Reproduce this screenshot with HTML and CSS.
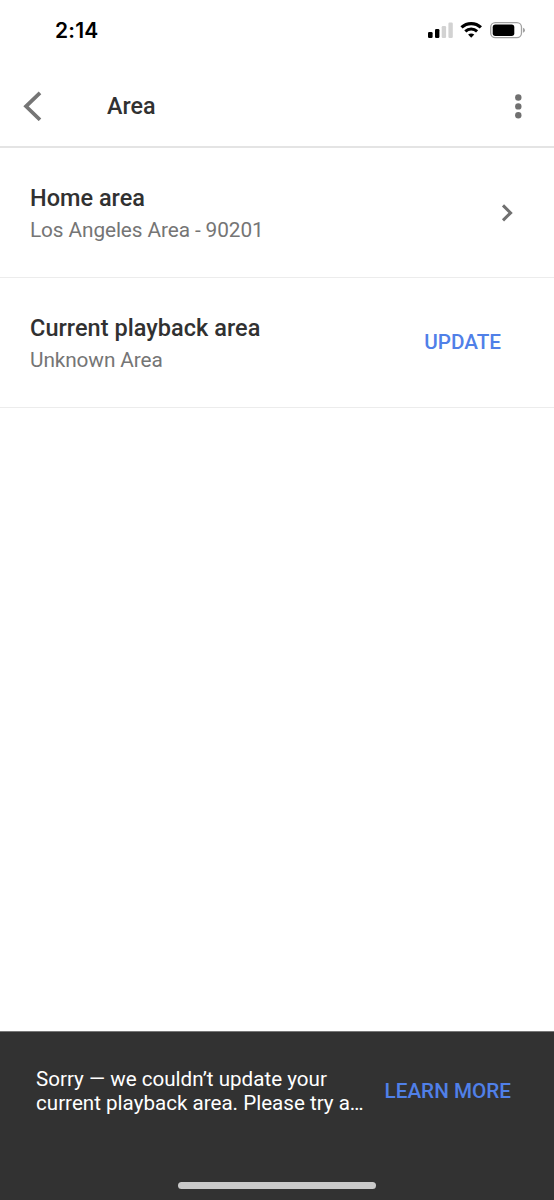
FILE: index.html
```html
<!DOCTYPE html>
<html lang="en">
<head>
<meta charset="utf-8">
<title>Area</title>
<link rel="stylesheet" href="styles.css">
</head>
<body>
<div class="screen">
  <div class="status">
    <span class="clock">2:14</span>
    <svg class="indicators" width="100" height="20" viewBox="0 0 100 20">
      <rect x="0" y="12" width="4.6" height="6" rx="1.2"/>
      <rect x="7" y="9" width="4.4" height="9" rx="1.2"/>
      <rect x="13.7" y="6" width="4.4" height="12" rx="1.2" fill="#d2d2d2"/>
      <rect x="20.4" y="2.5" width="4.4" height="15.5" rx="1.2" fill="#d2d2d2"/>
      <path d="M33.5 7.4 A14.2 14.2 0 0 1 52.9 7.4" fill="none" stroke="#000" stroke-width="3.2"/>
      <path d="M37.3 11.4 A8.6 8.6 0 0 1 49.1 11.4" fill="none" stroke="#000" stroke-width="3"/>
      <path d="M40.1 14.6 Q43.2 12.4 46.3 14.6 L43.2 17.8 Z"/>
      <rect x="62.7" y="2.7" width="30.8" height="15" rx="4.6" fill="none" stroke="#a2a2a2" stroke-width="1.3"/>
      <rect x="64.7" y="4.5" width="21.6" height="11.4" rx="2.7"/>
      <path d="M95 7.7 Q97 8.4 97 10.2 T95 12.7 Z" fill="#a2a2a2"/>
    </svg>
  </div>
  <header class="bar">
    <svg class="back" width="20" height="30" viewBox="0 0 20 30"><path d="M17 1.8 L3 15.3 L17 28.8" fill="none" stroke="#757575" stroke-width="3.7"/></svg>
    <h1 class="title">Area</h1>
    <svg class="more" width="8" height="26" viewBox="0 0 8 26" fill="#707070"><circle cx="4.3" cy="4.5" r="3.2"/><circle cx="4.3" cy="13.4" r="3.2"/><circle cx="4.3" cy="22.3" r="3.2"/></svg>
  </header>
  <main class="list">
    <section class="row">
      <div class="copy">
        <h2 class="name">Home area</h2>
        <p class="detail">Los Angeles Area - 90201</p>
      </div>
      <svg class="chevron" width="12" height="18" viewBox="0 0 12 18"><path d="M2 1.4 L9.6 8.9 L2 16.4" fill="none" stroke="#707070" stroke-width="3"/></svg>
    </section>
    <section class="row">
      <div class="copy">
        <h2 class="name current">Current playback area</h2>
        <p class="detail">Unknown Area</p>
      </div>
      <span class="action update">UPDATE</span>
    </section>
  </main>
  <footer class="snackbar">
    <div class="notice">
      <p class="message">Sorry — we couldn’t update your<br>current playback area. Please try a…</p>
      <span class="action learn">LEARN MORE</span>
    </div>
    <div class="home"></div>
  </footer>
</div>
</body>
</html>
```
FILE: styles.css
```css
* { box-sizing: border-box; }
body { margin: 0; background: #fff; font-family: Roboto, sans-serif; }
h1, h2, p { margin: 0; font-weight: 500; }
svg { display: block; flex: none; }

.screen { width: 554px; height: 1200px; display: flex; flex-direction: column; background: #fff; }

.status { height: 66px; padding: 17px 26px 0 55px; display: flex; justify-content: space-between; }
.clock { font: 600 21px/28px Inter, sans-serif; letter-spacing: 0.2px; color: #000; }
.indicators { margin-top: 3px; }

.bar { height: 82px; padding: 0 32px 0 23px; display: flex; align-items: center; border-bottom: 2px solid #e4e4e4; }
.title { flex: 1; margin-left: 64px; font-size: 23.3px; line-height: 30px; color: #313131; }

.row { height: 130px; padding: 0 41px 0 30px; display: flex; align-items: center; justify-content: space-between; border-bottom: 1px solid #ececec; }
.copy { padding-top: 2px; }
.name { font-size: 23.5px; line-height: 32px; color: #313131; white-space: nowrap; }
.current { letter-spacing: 0.04px; }
.detail { font-size: 20.8px; line-height: 32px; letter-spacing: -0.1px; font-weight: 400; color: #757575; white-space: nowrap; }
.action { font-size: 20.7px; line-height: 26px; font-weight: 500; color: #5080e8; white-space: nowrap; }
.update { margin-right: 12px; padding-bottom: 2px; }

.snackbar { height: 169px; margin-top: auto; padding: 35px 43px 11px 36px; display: flex; flex-direction: column; justify-content: space-between; background: #323232; border-top: 1px solid #777; }
.notice { display: flex; justify-content: space-between; align-items: center; }
.message { font-size: 20.6px; line-height: 24px; font-weight: 400; color: #fff; white-space: nowrap; }
.home { width: 198px; height: 7px; margin-left: 142px; border-radius: 4px; background: #cacaca; }
```
